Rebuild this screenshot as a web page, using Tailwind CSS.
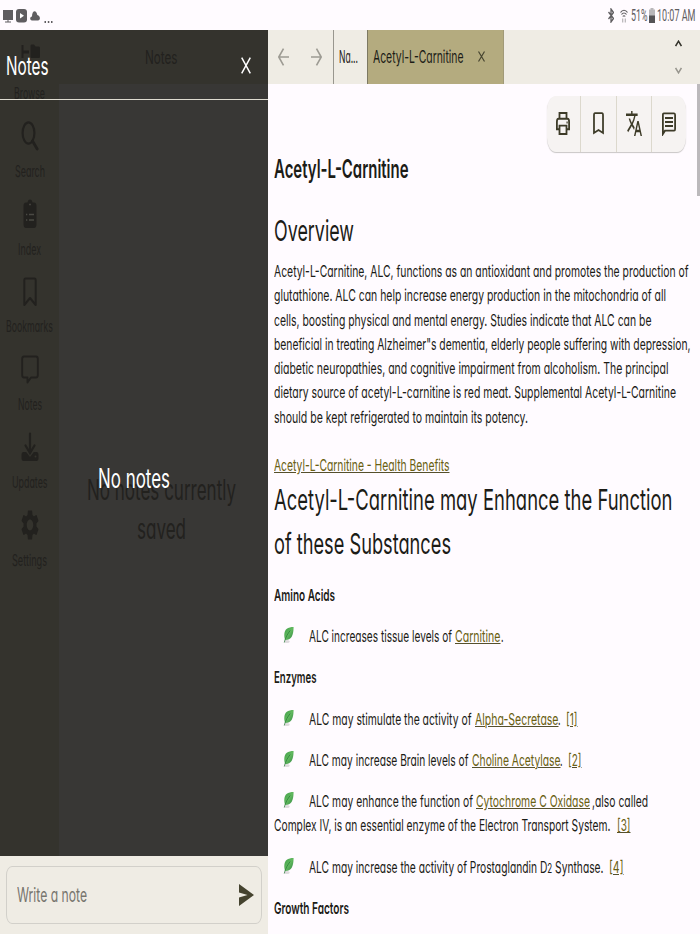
<!DOCTYPE html>
<html lang="en">
<head>
  <meta charset="UTF-8">
  <title>Acetyl-L-Carnitine</title>
  <script src="https://cdn.jsdelivr.net/npm/@tailwindcss/browser@4"></script>
</head>
<body class="w-[700px] h-[934px] overflow-hidden bg-[#fffbff] text-[#1c1c17] font-['Inter','Open_Sans',sans-serif] [font-feature-settings:'cv11']">
  <div class="flex flex-col h-full">

    <!-- status bar -->
    <header class="h-[29.5px] shrink-0 flex items-center justify-between pt-[2px] text-[#5f5d60]">
      <div class="flex items-center pl-[3px]">
        <svg class="w-[10px] h-[14px]" viewBox="0 0 10 14" fill="currentColor"><path d="M0 1h10v10H0zM4.500 11h1v1.500H8v1H2v-1h2.500z"/></svg>
        <svg class="w-[11px] h-[14px] ml-[3px]" viewBox="0 0 11 14"><rect width="11" height="13.500" rx="3" fill="currentColor"/><path d="M4 4l4 2.800-4 2.800z" fill="#fff"/></svg>
        <svg class="w-[10px] h-[14px] ml-[3px]" viewBox="0 0 10 14" fill="currentColor"><path d="M2 11.500C-.5 11.500-.3 7.500 2 7.500 2 1 6.500.5 7.300 6 10.500 6.500 10.800 11.500 8 11.500z"/></svg>
        <svg class="w-[9px] h-[14px] ml-[4px]" viewBox="0 0 9 14" fill="currentColor"><path d="M.5 12h1.500v2H.5zM3.800 12h1.500v2H3.800zM7 12h1.500v2H7z"/></svg>
      </div>
      <div class="flex items-center pr-[4.5px] font-[Roboto] text-[17px] leading-none">
        <svg class="w-[6px] h-[15px]" viewBox="0 0 6 15" fill="none" stroke="currentColor" stroke-width="1.300"><path d="M.5 4l5 6.500-2.500 3.500V1l2.500 3.500L.5 11"/></svg>
        <svg class="w-[8px] h-[14px] ml-[6px]" viewBox="0 0 8 14" fill="none" stroke="currentColor" stroke-width="1.200"><path d="M.5 3.500C2.500.5 5.500.5 7.500 3.500M1.500 5.500c1.500-2 3.500-2 5 0M2.800 7.500c.8-1 1.600-1 2.400 0"/><path stroke="#b5b3b6" d="M2.700 9.500v4M5.300 9.500v4"/></svg>
        <span class="ml-[3px]" data-fit="16.5">51%</span>
        <svg class="w-[6px] h-[15px] ml-[1.5px]" viewBox="0 0 6 15"><path fill="#b9b7ba" d="M1.500 0h3v1.500H6V8H0V1.500h1.500z"/><path fill="#555356" d="M0 7.500h6V15H0z"/></svg>
        <span class="ml-[2.5px]" data-fit="38.5">10:07 AM</span>
      </div>
    </header>

    <div class="flex flex-1 min-h-0">

      <!-- left side: navigation with the notes drawer over it -->
      <aside class="relative w-[267.5px] shrink-0 flex flex-col bg-[#383735]">
        <div class="flex flex-1 min-h-0 text-[#22211e]">
          <nav class="w-[59px] shrink-0 bg-[#34332d] flex flex-col items-center gap-[16.3px] pt-[14px] text-[16px] leading-[24px]">
            <div class="flex flex-col items-center gap-[7.5px]">
              <svg class="w-[20px] h-[30px]" viewBox="0 0 20 30" fill="currentColor"><path d="M1.500 1h2v5.500H9v3H3.500V14h-2zM10.500 2q0-1.500 1-1.500H14l1.500 2h3.500q1 0 1 1.500v8.500q0 1.500-1 1.500h-7.500q-1 0-1-1.500z"/></svg>
              <div class="w-[31px]"><span data-fit="31">Browse</span></div>
            </div>
            <div class="flex flex-col items-center gap-[7.5px]">
              <svg class="w-[18px] h-[30px]" viewBox="0 0 18 30" fill="none" stroke="currentColor"><ellipse cx="7.500" cy="12" rx="5.900" ry="10.700" stroke-width="2.200"/><path d="M11.500 20l4.700 8" stroke-width="2.800" stroke-linecap="round"/></svg>
              <div class="w-[30px]"><span data-fit="30">Search</span></div>
            </div>
            <div class="flex flex-col items-center gap-[7.5px]">
              <svg class="w-[14px] h-[30px]" viewBox="0 0 14 30"><path fill="currentColor" d="M3 3.500h1.500Q5 .5 7 .5t2.500 3H11q2.500 0 2.500 3.500v18q0 4-2.500 4H3q-2.500 0-2.500-4V7Q.5 3.500 3 3.500z"/><path stroke="#4a4943" stroke-width="1.300" d="M6.200 5.500h1.600M3 15.500h1.300M6 15.500h5M3 21h1.300M6 21h5"/></svg>
              <div class="w-[23px]"><span data-fit="23">Index</span></div>
            </div>
            <div class="flex flex-col items-center gap-[7.5px]">
              <svg class="w-[14px] h-[30px]" viewBox="0 0 14 30" fill="none" stroke="currentColor" stroke-width="2" stroke-linejoin="round"><path d="M1.300 28V3.500Q1.300 1.500 2.500 1.500h9q1.200 0 1.200 2V28L7 21z"/></svg>
              <div class="w-[47px]"><span data-fit="47">Bookmarks</span></div>
            </div>
            <div class="flex flex-col items-center gap-[7.5px]">
              <svg class="w-[18px] h-[30px]" viewBox="0 0 18 30" fill="none" stroke="currentColor" stroke-width="1.900" stroke-linejoin="round"><path d="M3 1.500h12q1.800 0 1.800 2.500v16q0 2.500-1.800 2.500h-5l-3.500 5v-5H3q-1.800 0-1.800-2.500V4Q1.200 1.500 3 1.500z"/></svg>
              <div class="w-[24px]"><span data-fit="24">Notes</span></div>
            </div>
            <div class="flex flex-col items-center gap-[7.5px]">
              <svg class="w-[18px] h-[30px]" viewBox="0 0 18 30"><path fill="none" stroke="currentColor" stroke-width="2.200" stroke-linecap="round" d="M9 1.500V20M4.500 13.500L9 21l4.500-7.500"/><path fill="currentColor" d="M2.500 20h2.700L9 25l3.800-5h2.700q2 0 2 3v3q0 3-2 3h-13q-2 0-2-3v-3q0-3 2-3z"/><circle cx="14.500" cy="24.500" r="1" fill="#34332d"/></svg>
              <div class="w-[35.5px]"><span data-fit="35.5">Updates</span></div>
            </div>
            <div class="flex flex-col items-center gap-[7.5px]">
              <svg class="w-[18px] h-[30px]" viewBox="2 2 20 20" preserveAspectRatio="none" fill="currentColor"><path d="M19.140 12.940c.04-.3.060-.61.060-.94 0-.32-.02-.64-.07-.94l2.030-1.580c.18-.14.230-.41.120-.61l-1.920-3.320c-.12-.22-.37-.29-.59-.22l-2.390.96c-.5-.38-1.030-.7-1.620-.94l-.36-2.540c-.04-.24-.24-.41-.48-.41h-3.840c-.24 0-.43.170-.47.410l-.36 2.540c-.59.240-1.130.57-1.620.94l-2.390-.96c-.22-.08-.47 0-.59.220L2.740 8.870c-.12.210-.08.470.120.610l2.030 1.580c-.05.3-.09.630-.09.940s.02.640.070.940l-2.030 1.580c-.18.140-.23.410-.12.610l1.920 3.320c.12.220.37.290.59.220l2.390-.96c.5.380 1.030.7 1.620.94l.36 2.540c.05.240.24.410.48.410h3.840c.24 0 .44-.17.470-.41l.36-2.540c.59-.24 1.130-.56 1.620-.94l2.390.96c.22.080.47 0 .59-.22l1.920-3.320c.12-.22.070-.47-.12-.61l-2.010-1.580zM12 15.600c-1.980 0-3.600-1.620-3.600-3.600s1.620-3.600 3.600-3.600 3.600 1.620 3.600 3.600-1.620 3.600-3.600 3.600z"/></svg>
              <div class="w-[35px]"><span data-fit="35">Settings</span></div>
            </div>
          </nav>
          <section class="flex-1 flex flex-col">
            <div class="h-[54.5px] bg-[#34332d] pl-[85.5px] pt-[16px] text-[18px] leading-[24px]"><span data-fit="32.5">Notes</span></div>
            <div class="pt-[387px] text-[28px] leading-[38.5px]">
              <div class="pl-[28px]"><span data-fit="149">No notes currently</span></div>
              <div class="pl-[78px]"><span data-fit="49">saved</span></div>
            </div>
          </section>
        </div>

        <!-- drawer -->
        <div class="absolute inset-x-0 top-0 h-[826px] text-white">
          <div class="h-[70px] flex items-center justify-between pl-[6px] pr-[17px] pt-[3px] border-b border-[#dedbd0] text-[25px] leading-[30px]">
            <span data-fit="42.5">Notes</span>
            <svg class="w-[10px] h-[17px]" viewBox="0 0 10 17" fill="none" stroke="currentColor" stroke-width="1.500"><path d="M.7.700l8.600 15.600M9.300.7L.7 16.300"/></svg>
          </div>
          <div class="pl-[98px] pt-[361px] text-[26.5px] leading-[34px]"><span data-fit="72">No notes</span></div>
        </div>

        <div class="relative h-[78.5px] shrink-0 bg-[#efece4] pt-[10.5px] px-[6px]">
          <div class="h-[58px] rounded-[6px/9px] border border-[#d2d0ca] flex items-center justify-between pl-[10px] pr-[7px] text-[19.5px] text-[#77756e]">
            <span class="pt-[2px]" data-fit="70">Write a note</span>
            <svg class="w-[15px] h-[22px]" viewBox="0 0 15 22" fill="#45432f"><path d="M0 0l15 11L0 22v-8.500L8.500 11 0 8.500z"/></svg>
          </div>
        </div>
      </aside>

      <!-- right side: tabs and article -->
      <main class="flex-1 min-w-0 flex flex-col">
        <div class="h-[54.5px] shrink-0 flex bg-[#efece4] text-[17px]">
          <div class="w-[65.5px] shrink-0 flex items-center justify-between pl-[10.5px] pr-[11px] text-[#9d9b93]">
            <svg class="w-[11px] h-[18px]" viewBox="0 0 11 18" fill="none" stroke="currentColor" stroke-width="1.600"><path d="M11 9H1M5.500 .7L.8 9l4.700 8.300"/></svg>
            <svg class="w-[11px] h-[18px]" viewBox="0 0 11 18" fill="none" stroke="currentColor" stroke-width="1.600"><path d="M0 9h10M5.500 .7L10.200 9l-4.700 8.300"/></svg>
          </div>
          <div class="w-[33.5px] shrink-0 flex items-center border-l border-[#98968e] pl-[4.5px]"><span class="pt-px" data-fit="19">Na...</span></div>
          <div class="w-[137px] shrink-0 flex items-center bg-[#b4ab7f] border-l border-r border-l-[#7d7962] border-r-[#a19a78] pl-[5px]">
            <span class="pt-px" data-fit="90.5">Acetyl-L-Carnitine</span>
            <svg class="w-[7px] h-[11px] ml-[15px] shrink-0" viewBox="0 0 7 11" fill="none" stroke="#45432f" stroke-width="1.200"><path d="M.5.500l6 10M6.500.5l-6 10"/></svg>
          </div>
          <div class="ml-auto flex flex-col justify-between pt-[10px] pb-[10px] pr-[18.5px]">
            <svg class="w-[7px] h-[7px]" viewBox="0 0 7 7" fill="none" stroke="#33322a" stroke-width="1.500"><path d="M.6 6L3.500 1.200 6.400 6"/></svg>
            <svg class="w-[7px] h-[7px]" viewBox="0 0 7 7" fill="none" stroke="#98968e" stroke-width="1.500"><path d="M.6 1L3.500 5.800 6.400 1"/></svg>
          </div>
        </div>

        <article class="relative flex-1 min-h-0 overflow-hidden pl-[6.5px] pt-[67px] text-[16.5px] leading-[24.3px] whitespace-nowrap">
          <div class="absolute right-0 top-0 w-[3px] h-[112px] bg-[#bcb9bc]"></div>
          <div class="absolute left-[279px] top-[12px] w-[139.5px] h-[55.5px] flex rounded-[9px/14px] bg-[#f6f3f2] shadow-[0_1px_1px_#c9c6c6] text-[#3d3b28]">
            <div class="w-[34px] flex items-center justify-center border-r border-[#dcd8cd]">
              <svg class="w-[14px] h-[23px]" viewBox="0 0 14 22" preserveAspectRatio="none" fill="none" stroke="currentColor" stroke-width="1.800"><path d="M3.500 6.500V1h7v5.500M3.500 16.500H.9V9.500q0-3 1.600-3h9q1.600 0 1.600 3v7h-2.600M3.500 13h7v8h-7zM10.500 10h1.200"/></svg>
            </div>
            <div class="w-[36px] flex items-center justify-center border-r border-[#dcd8cd]">
              <svg class="w-[11px] h-[23px]" viewBox="0 0 10 22" preserveAspectRatio="none" fill="none" stroke="currentColor" stroke-width="1.600"><path d="M.9 20V3q0-2 1-2h6.200q1 0 1 2v17L5 17.200z"/></svg>
            </div>
            <div class="w-[35.5px] flex items-center justify-center border-r border-[#dcd8cd]">
              <svg class="w-[16px] h-[25px]" viewBox="1 2 22 20" preserveAspectRatio="none" fill="currentColor"><path d="M12.870 15.070l-2.540-2.510.03-.03c1.740-1.940 2.980-4.170 3.710-6.530H17V4h-7V2H8v2H1v1.990h11.170C11.500 7.920 10.440 9.750 9 11.350 8.070 10.320 7.300 9.190 6.690 8h-2c.73 1.630 1.730 3.170 2.980 4.560l-5.090 5.020L4 19l5-5 3.110 3.110.76-2.040zM18.500 10h-2L12 22h2l1.120-3h4.750L21 22h2l-4.500-12zm-2.620 7l1.620-4.330L19.120 17h-3.240z"/></svg>
            </div>
            <div class="w-[34px] flex items-center justify-center">
              <svg class="w-[14px] h-[24px]" viewBox="0 0 14 24" fill="none" stroke="currentColor" stroke-width="1.800"><path d="M.9 22V3q0-1.700 1-1.700h10.200q1 0 1 1.700v14q0 1.700-1 1.700H3z"/><path d="M3 6h8M3 10h8M3 14h8"/></svg>
            </div>
          </div>

          <h1 class="text-[25.5px] leading-[36px] font-semibold"><span data-fit="134.5">Acetyl-L-Carnitine</span></h1>
          <h2 class="mt-[22.3px] text-[29px] leading-[44px]"><span data-fit="80">Overview</span></h2>
          <div class="mt-[5.7px]">
            <div><span data-fit="414.5">Acetyl-L-Carnitine, ALC, functions as an antioxidant and promotes the production of</span></div>
            <div><span data-fit="392">glutathione. ALC can help increase energy production in the mitochondria of all</span></div>
            <div><span data-fit="377.5">cells, boosting physical and mental energy. Studies indicate that ALC can be</span></div>
            <div><span data-fit="416.5">beneficial in treating Alzheimer"s dementia, elderly people suffering with depression,</span></div>
            <div><span data-fit="394.5">diabetic neuropathies, and cognitive impairment from alcoholism. The principal</span></div>
            <div><span data-fit="402">dietary source of acetyl-L-carnitine is red meat. Supplemental Acetyl-L-Carnitine</span></div>
            <div><span data-fit="254">should be kept refrigerated to maintain its potency.</span></div>
          </div>
          <div class="mt-[24.3px]"><a class="text-[#695f12] underline decoration-[#55502c]" data-fit="175.5">Acetyl-L-Carnitine - Health Benefits</a></div>
          <h2 class="text-[29px] leading-[44px]">
            <div><span data-fit="398.5">Acetyl-L-Carnitine may Enhance the Function</span></div>
            <div><span data-fit="177">of these Substances</span></div>
          </h2>

          <div class="flex flex-col gap-[17px] mt-[17px]">
            <h3 class="font-semibold"><span data-fit="61">Amino Acids</span></h3>
            <div class="flex pl-[9px]">
              <svg class="leaf w-[11px] h-[18px] mt-[2px] mr-[15px] shrink-0" viewBox="0 0 13 18" preserveAspectRatio="none"></svg>
              <span data-fit="143">ALC increases tissue levels of</span>
              <a class="ml-[3px] text-[#695f12] underline decoration-[#55502c]" data-fit="45.5">Carnitine</a>
              <span data-fit="2.5">.</span>
            </div>
            <h3 class="font-semibold"><span data-fit="42.5">Enzymes</span></h3>
            <div class="flex pl-[9px]">
              <svg class="leaf w-[11px] h-[18px] mt-[2px] mr-[15px] shrink-0" viewBox="0 0 13 18" preserveAspectRatio="none"></svg>
              <span data-fit="162.5">ALC may stimulate the activity of</span>
              <a class="ml-[3px] text-[#695f12] underline decoration-[#55502c]" data-fit="83.5">Alpha-Secretase</a>
              <span data-fit="2.5">.</span>
              <a class="ml-[5px] text-[#695f12] underline decoration-[#55502c]" data-fit="11.5">[1]</a>
            </div>
            <div class="flex pl-[9px]">
              <svg class="leaf w-[11px] h-[18px] mt-[2px] mr-[15px] shrink-0" viewBox="0 0 13 18" preserveAspectRatio="none"></svg>
              <span data-fit="159.5">ALC may increase Brain levels of</span>
              <a class="ml-[3px] text-[#695f12] underline decoration-[#55502c]" data-fit="88.5">Choline Acetylase</a>
              <span data-fit="2.5">.</span>
              <a class="ml-[5px] text-[#695f12] underline decoration-[#55502c]" data-fit="13.5">[2]</a>
            </div>
            <div>
              <div class="flex pl-[9px]">
                <svg class="leaf w-[11px] h-[18px] mt-[2px] mr-[15px] shrink-0" viewBox="0 0 13 18" preserveAspectRatio="none"></svg>
                <span data-fit="164">ALC may enhance the function of</span>
                <a class="ml-[3px] text-[#695f12] underline decoration-[#55502c]" data-fit="114">Cytochrome C Oxidase</a>
                <span class="ml-[2px]" data-fit="56">,also called</span>
              </div>
              <div class="flex">
                <span data-fit="336.5">Complex IV, is an essential enzyme of the Electron Transport System.</span>
                <a class="ml-[6px] text-[#695f12] underline decoration-[#55502c]" data-fit="13.5">[3]</a>
              </div>
            </div>
            <div class="flex pl-[9px]">
              <svg class="leaf w-[11px] h-[18px] mt-[2px] mr-[15px] shrink-0" viewBox="0 0 13 18" preserveAspectRatio="none"></svg>
              <span data-fit="294.5">ALC may increase the activity of Prostaglandin D<span class="text-[13px] leading-none">2</span> Synthase.</span>
              <a class="ml-[5px] text-[#695f12] underline decoration-[#55502c]" data-fit="14.5">[4]</a>
            </div>
            <h3 class="font-semibold"><span data-fit="75">Growth Factors</span></h3>
          </div>
        </article>
      </main>
    </div>
  </div>

  <svg class="absolute" width="0" height="0">
    <defs>
      <linearGradient id="leafFill" x1="0" y1="0" x2="1" y2="1">
        <stop offset="0" stop-color="#3d9c46"/>
        <stop offset=".5" stop-color="#62b95f"/>
        <stop offset="1" stop-color="#2f8440"/>
      </linearGradient>
    </defs>
  </svg>

  <script>
    // same bullet for every list row
    document.querySelectorAll('.leaf').forEach((el) => {
      el.innerHTML = '<ellipse cx="4.500" cy="15.500" rx="3.500" ry="1.500" fill="#dedadd"/>' +
        '<path d="M12.500 1C6 1 1.500 3 1.500 9c0 2 .4 3.800 1.200 5C9.500 14 12.500 10 12.500 1z" fill="url(#leafFill)"/>' +
        '<path d="M8.500 4.500C5.500 8 3 11 1.500 16.500" fill="none" stroke="#277a38" stroke-width=".8"/>';
    });

    // condense each text run to its width in px
    function fit(el) {
      const natural = parseFloat(getComputedStyle(el).width);
      const width = parseFloat(el.dataset.fit);
      if (!natural) return;
      el.style.transform = `scaleX(${width / natural})`;
      el.style.marginRight = `${width - natural}px`;
    }

    const observer = new ResizeObserver((entries) => {
      entries.forEach((entry) => fit(entry.target));
    });

    document.querySelectorAll('[data-fit]').forEach((el) => {
      el.style.display = 'inline-block';
      el.style.flexShrink = 0;
      el.style.whiteSpace = 'nowrap';
      el.style.transformOrigin = 'left';
      fit(el);
      observer.observe(el);
    });

    window.addEventListener('load', () => {
      document.querySelectorAll('[data-fit]').forEach(fit);
    });
  </script>
</body>
</html>
